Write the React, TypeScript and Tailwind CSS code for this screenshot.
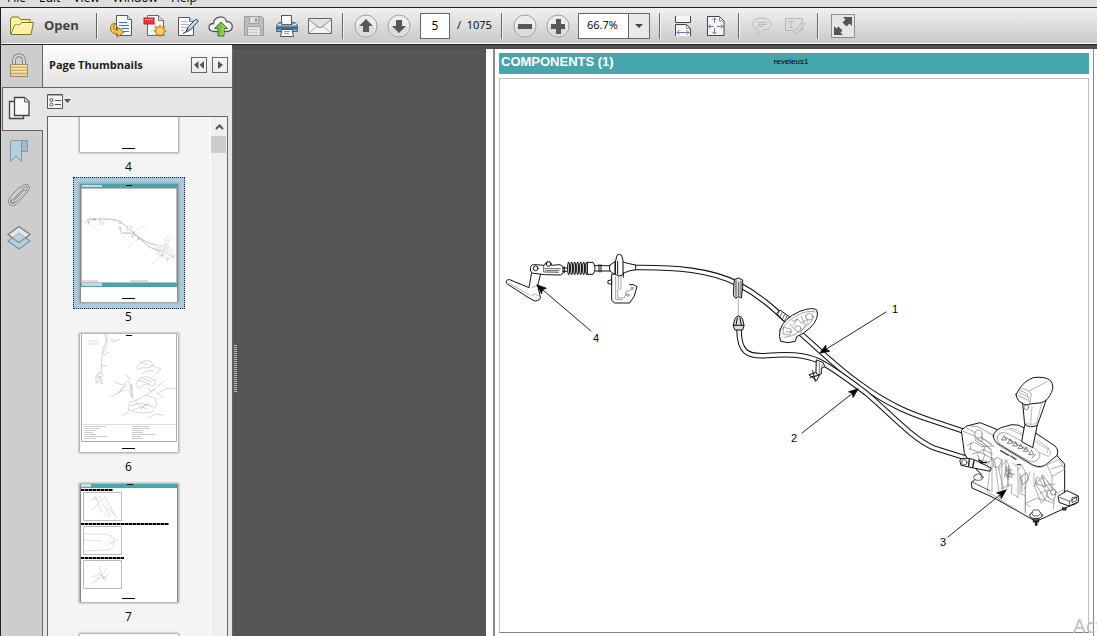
import type { ReactNode } from "react";

const menus = ["File", "Edit", "View", "Window", "Help"];

function IconButton({ label, children }: { label: string; children: ReactNode }) {
  return (
    <button
      aria-label={label}
      className="flex h-[35px] w-[33px] shrink-0 items-center justify-center"
    >
      {children}
    </button>
  );
}

function Separator() {
  return (
    <div className="mr-[5px] ml-[6px] h-[26px] w-[2px] shrink-0 border-r border-[#f2f2f2] bg-[#666]" />
  );
}

function FolderIcon() {
  return (
    <svg width="26" height="22" viewBox="0 0 26 22" strokeLinejoin="round">
      <path d="M1.500 19V4l1.500-2h6.500l2 2.500H21V8" fill="#fdf6a0" stroke="#83701f" />
      <path d="M2 19.500 5.500 10h5l2-2.500h12L22 19.500z" fill="#fdf0a6" stroke="#83701f" />
      <path d="M3.500 18.500 6.500 11h5l2-2.500h9.500" fill="none" stroke="#fffde0" />
    </svg>
  );
}

function ExportIcon() {
  return (
    <svg width="24" height="24" viewBox="0 0 24 24">
      <path d="M6.500 1.500h11l4 4v16h-15z" fill="#fafafa" stroke="#555" />
      <path d="M17.500 1.500v4h4" fill="#ddd" stroke="#777" />
      <path d="M9 8.500h8M9 11.500h10M11 14.500h8M13 17.500h6" stroke="#3a78b4" />
      <path
        d="M6.500 9.500H4C1 10 .5 13 .5 15c0 3 3 5 7 5v3l6.500-5-6.500-5v3c-3 0-3.500-1-3.500-3 0-1.500.5-2.500 2.500-3.500z"
        fill="#f4c04c"
        stroke="#9a6b15"
      />
    </svg>
  );
}

function CreatePdfIcon() {
  return (
    <svg width="24" height="24" viewBox="0 0 24 24">
      <path d="M4.500 1.500h11l5 5v15h-16z" fill="#f7f7f7" stroke="#666" />
      <path d="M15.500 1.500v5h5" fill="#ddd" stroke="#777" />
      <path d="M12 8c1 4-1 8-4 10" fill="none" stroke="#ccc" />
      <rect x="1" y="4" width="10" height="6" fill="#e0393e" stroke="#b5242a" />
      <path d="M2 5.500h8" stroke="#f2888b" />
      <path
        d="m17 11 1.500 2.500 3-1-1 3L23 17l-2.500 1.500 1 3-3-1L17 23l-1.500-2.500-3 1 1-3L11 17l2.500-1.500-1-3 3 1z"
        fill="#f5b942"
        stroke="#bd7f20"
      />
      <circle cx="17" cy="17" r="3" fill="#fbd473" />
    </svg>
  );
}

function SignIcon() {
  return (
    <svg width="24" height="24" viewBox="0 0 24 24">
      <path d="M2.500 3.500h11l4 4v14h-15z" fill="#f9f9f9" stroke="#555" />
      <path d="M13.500 3.500v4h4" fill="#ddd" stroke="#777" />
      <path d="M5 7.500h6M5 10.500h8M5 13.500h6M5 16.500h3" stroke="#b5b5b5" />
      <path d="m10 18 2-5 8-8 2.500 2-8 9z" fill="#a9cbe2" stroke="#3e5566" />
      <path d="m7 19.500 3-1.500 2-4" stroke="#333" fill="none" />
      <path d="m13.500 14 7-7" stroke="#e5f2fa" />
    </svg>
  );
}

function CloudIcon() {
  return (
    <svg width="26" height="24" viewBox="0 0 26 24">
      <path
        d="M7 17.500c-8 0-7.500-8-1.500-8C6 2 17 .5 18.500 7.500c7.500 0 8 10 0 10z"
        fill="#f4f4f4"
        stroke="#555"
        strokeWidth="1.300"
      />
      <path d="m13 8 6.500 6.500H16V22h-6v-7.500H6.500z" fill="#79c043" stroke="#387a1b" />
      <path d="m13 9.500 4 4h-2v7h-3" fill="none" stroke="#b3e285" />
    </svg>
  );
}

function SaveIcon() {
  return (
    <svg width="22" height="22" viewBox="0 0 22 22">
      <path d="M1.500 1.500h17l2 2v17h-19z" fill="#bdbdbd" stroke="#9a9a9a" />
      <path d="M6.500 1.500h9v7h-9z" fill="#dedede" stroke="#a0a0a0" />
      <path d="M12 3h2v4h-2z" fill="#a0a0a0" />
      <path d="M4.500 11.500h13v9h-13z" fill="#e3e3e3" stroke="#a3a3a3" />
      <path d="M6 14.500h9M6 17.500h9" stroke="#bbb" strokeDasharray="2 1" />
    </svg>
  );
}

function PrintIcon() {
  return (
    <svg width="24" height="24" viewBox="0 0 24 24">
      <path d="M6.500 1.500h10v9h-10z" fill="#fdfdfd" stroke="#555" />
      <path d="M4 8.500h3v2h10v-2h3l2.500 3v6h-21v-6z" fill="#8ab0cc" stroke="#46657c" />
      <path d="M2 12.500h20v3H2z" fill="#486a85" />
      <path d="M3 10.500h3M18 10.500h3" stroke="#d5e8f4" />
      <path d="M7 15.500h10l1.500 7h-13z" fill="#fafafa" stroke="#555" />
      <path d="M9 17.500h6M9 19.500h5" stroke="#999" />
    </svg>
  );
}

function MailIcon() {
  return (
    <svg width="26" height="18" viewBox="0 0 26 18">
      <path d="M1.500 1.500h23v15h-23z" fill="#f1f1f1" stroke="#666" />
      <path d="m2 16 8-7M24 16l-8-7" stroke="#aaa" />
      <path d="M2 2.500 11 10q2 1.500 4 0l9-7.500" fill="#e2e2e2" stroke="#888" />
    </svg>
  );
}

function RoundIcon({ d }: { d: string }) {
  return (
    <svg width="24" height="24" viewBox="0 0 24 24">
      <circle cx="12" cy="12" r="11" fill="#ececec" stroke="#a0a0a0" />
      <path d="M3 13a9 9 0 0 0 18 0z" fill="#dcdcdc" />
      <path d={d} fill="#585858" />
    </svg>
  );
}

function FitWidthIcon() {
  return (
    <svg width="18" height="22" viewBox="0 0 18 22" fill="none">
      <path d="M1.500 1v6.500h15V1" fill="#f6f6f6" stroke="#444" />
      <path d="M1.500 21V9.500h11l4 4V21" fill="#f6f6f6" stroke="#444" />
      <path d="M12.500 9.500v4h4" stroke="#888" />
      <path d="M3 17.500h12M5.500 15 3 17.500 5.500 20M12.500 15l2.500 2.500-2.500 2.500" stroke="#6479b0" />
    </svg>
  );
}

function FitPageIcon() {
  return (
    <svg width="18" height="22" viewBox="0 0 18 22" fill="none">
      <path d="M.5 1.500h12l4.500 4.500v14.500H.5z" fill="#f6f6f6" stroke="#444" />
      <path d="M12.500 1.500V6H17" stroke="#888" />
      <path d="M7.500 3v5M7.500 13v6M1.500 11.500h5M10 11.500h6" stroke="#6479b0" />
      <path
        d="m5.500 5 2-2 2 2M5.500 17l2 2 2-2M3.500 9.500l-2 2 2 2M14 9.500l2 2-2 2"
        stroke="#6479b0"
      />
    </svg>
  );
}

function CommentIcon() {
  return (
    <svg width="22" height="20" viewBox="0 0 22 20" fill="none" stroke="#bababa">
      <path d="M11 2c12 0 12 12 1 12l-5 4.500.5-5C-2 11 .5 2 11 2z" fill="#dedede" />
      <path d="M6.500 6.500h9M6.500 8.500h9M6.500 10.500h6" />
    </svg>
  );
}

function MarkupIcon() {
  return (
    <svg width="22" height="20" viewBox="0 0 22 20" fill="none" stroke="#b8b8b8">
      <path d="M1.500 2.500h17v12h-17z" fill="#dcdcdc" />
      <path d="M4 5.500h6M7 5.500v6M5.500 11.500h3" />
      <path d="m10 18 1.500-4 7-8 2.500 2-7 8.500z" fill="#d8d8d8" />
    </svg>
  );
}

function LockIcon() {
  return (
    <svg width="20" height="25" viewBox="0 0 20 25">
      <path d="M5 12V7.500c0-7 10-7 10 0V12" fill="none" stroke="#848484" strokeWidth="4" />
      <path d="M5 12V7.500c0-7 10-7 10 0V12" fill="none" stroke="#d8d8d8" strokeWidth="2" />
      <path d="M1.500 11.500h17v12h-17z" fill="#e9cf94" stroke="#a18c64" />
      <path d="M2 14.500h16M2 17.500h16M2 20.500h16" stroke="#c9aa6d" />
      <path d="M2 12.500h16M2 15.500h16M2 18.500h16" stroke="#f4e3b8" />
    </svg>
  );
}

function PagesIcon() {
  return (
    <svg width="22" height="24" viewBox="0 0 22 24">
      <path d="M1.500 5.500h14v17h-14z" fill="#f2f2f2" stroke="#444" strokeWidth="1.300" />
      <path d="M6.500 1.500h10l4.500 4v14H6.500z" fill="#f8f8f8" stroke="#444" strokeWidth="1.300" />
      <path d="M16.500 1.500v4.500H21" fill="#ddd" stroke="#666" />
    </svg>
  );
}

function BookmarkIcon() {
  return (
    <svg width="20" height="25" viewBox="0 0 20 25" stroke="#7e97a7">
      <path d="M9 1.500h9.500v11H13z" fill="#9cbdd2" />
      <path d="M1.500 22.500V3q0-1.500 2-1.500h11q-2 0-2 3v18L7 17z" fill="#b5cfdf" />
    </svg>
  );
}

function ClipIcon() {
  const d = "M17.500 8 8.500 17.500c-2 2-4.500 0-2.500-2.500L16 4c3-3.500 7-.5 4.500 3L9.500 19.500c-4 4.500-9.500.5-6-4L13 5";
  return (
    <svg width="24" height="24" viewBox="0 0 24 24" fill="none" strokeLinecap="round">
      <path d={d} stroke="#7d7d7d" strokeWidth="2.800" />
      <path d={d} stroke="#dedede" strokeWidth="1.200" />
    </svg>
  );
}

function LayersIcon() {
  return (
    <svg width="26" height="26" viewBox="0 0 26 26" strokeWidth="1.200">
      <path d="m2 16 11-8 11 8-11 8z" fill="#b8d0e0" stroke="#7895a7" />
      <path d="m2 9.500 11-8 11 8-11 8z" fill="#e9e9e9" fillOpacity=".85" stroke="#777" />
      <path d="m7 12.500 6-4.500 6 4.500-6 4.500z" fill="#bfd3df" stroke="#91a9b7" strokeWidth=".8" />
    </svg>
  );
}

const railItems = [
  { label: "Bookmarks", icon: <BookmarkIcon /> },
  { label: "Attachments", icon: <ClipIcon /> },
  { label: "Layers", icon: <LayersIcon /> },
];

function Arrow({ x1, y1, x2, y2 }: { x1: number; y1: number; x2: number; y2: number }) {
  const a = (Math.atan2(y2 - y1, x2 - x1) * 180) / Math.PI;
  return (
    <g>
      <path d={`M${x1} ${y1}L${x2} ${y2}`} stroke="#222" />
      <path d="M0 0-9-3.500-7 0-9 3.500z" fill="#000" transform={`translate(${x2} ${y2}) rotate(${a})`} />
    </g>
  );
}

const cables = [
  "M634 267.500C675 267 712 270 738 284C764 298 776 311 800 333C822 352 836 367 860 384C890 406 912 414 930 420L963 431",
  "M739 329C739 352 747 357 767 355.500C786 354 803 354 819 361C836 370 850 381 866 393C892 415 914 440 934 448L966 458",
];

function CableDrawing({ className }: { className?: string }) {
  return (
    <svg
      className={className}
      viewBox="500 79 588 553"
      fill="none"
      stroke="#111"
      strokeLinejoin="round"
      strokeLinecap="round"
    >
      {cables.map((d) => (
        <g key={d}>
          <path d={d} strokeWidth="5.500" />
          <path d={d} stroke="#fff" strokeWidth="3.400" />
        </g>
      ))}

      {/* transmission end: lever, bellows and bracket */}
      <g transform="translate(495 240) scale(.3333)" strokeWidth="3" fill="#fff">
        <path d="M34 128q-2-10 10-9l58 24 8-46h28l-10 40 8 34q1 11-17 12l-20-11-59-38z" />
        <path d="M112 142q14-8 24 0M42 130l60 34M110 166q10-8 20 0" stroke="#888" strokeWidth="2" />
        <path d="M112 99q-8-4-6-16 3-11 14-9l28 2 4-7q3-6 14-2l4 9 25-2 9 6v20l-8 5-46-1z" />
        <circle cx="122" cy="85" r="7" />
        <path d="M146 78v18l44 1M150 86h46M152 92h40" strokeWidth="2" />
        <circle cx="161" cy="72" r="7" />
        <path d="M204 84h12M204 94h12M208 80v18" />
        <path d="M216 70h62v30h-62z" stroke="none" />
        {[221, 230, 239, 248, 257, 266, 275].map((x) => (
          <ellipse key={x} cx={x} cy="85" rx="3" ry="18" strokeWidth="3.500" />
        ))}
        <path d="M278 67h16q6 8 6 18t-6 18h-16z" />
        <path d="M300 77h45M300 93h45M312 74v22M318 74v22M345 75l15-10v40l-15-12zM384 66l18 5 20 4v14l-20 4-18 7z" />
        <path d="M350 104v76l8 9h46l14-21 8-28-11-6h-30v-34z" />
        <path d="M362 108v70l20 2M370 104v40M378 104v42l-10 4v24h20l6-20 20-6" stroke="#777" strokeWidth="2" />
        <path d="M362 62l4-16q6-6 14 0l4 16v42q-10 8-22 0zM368 64v38M340 122l10-3v14l-10-2z" />
        <circle cx="398" cy="165" r="4" stroke="#888" />
        <circle cx="411" cy="144" r="3" stroke="#888" />
      </g>

      {/* clips and firewall grommet */}
      <g transform="translate(690 250) scale(.3333)" strokeWidth="3" fill="#fff">
        <path d="M132 100l2-12 12-4 12 6v22l-4 32-8-4-9 5-6-8z" fill="#ddd" />
        <path d="M138 92v46M146 98v38M153 94v42" stroke="#555" />
        <path d="M145 146v54" stroke="#888" strokeWidth="2" />
        <path d="M130 226l4-18 6-8q6-4 12 0l6 8 4 18-4 14h-22zM130 226h32M142 204l-4 22M150 204l4 22" fill="#ddd" />
        <path d="M260 190l10-10 28 20-10 18z" />
        <path d="M268 182l-6 16M276 188l-8 16M284 194l-8 16M291 198l-8 16" strokeWidth="2" />
        <path d="M270 240q10-35 60-56 38-14 50-4 10 24-20 54-20 18-40 26l-4 14q-22 8-44 0-6-12-2-34z" />
        <path
          d="M276 238q14-28 58-48 30-10 42-4M284 262q30-2 62-30 24-20 26-34M282 232l22 6-4 18-20-4zM306 214l18-6 10 12 22-14M318 230l14 18 20-30M300 222l12 14M288 246h18M346 196l8 18M334 198l10 26M322 206l-12 20"
          stroke="#777"
          strokeWidth="2"
        />
        <circle cx="358" cy="200" r="10" stroke="#777" strokeWidth="2" />
        <circle cx="324" cy="236" r="9" stroke="#777" strokeWidth="2" />
        <path d="M380 330l20 8 4 12-10 6v16l-16 6v-14z" />
        <path d="M388 338v34M398 344l-4 10" stroke="#777" />
        <path d="M358 374l18-6 12 8-8 16-10-8zM368 362l8 32M360 382l26-6" />
      </g>

      {/* shift lever and gate housing */}
      <g transform="translate(930 360) scale(.3333)" strokeWidth="3" fill="#fff">
        <path d="M95 210l15-12 40-10 60 24 30-16 40 8 40 18 62 66 22 24v92l38 4-2 22-30 12-60 28-32 14-22-12-96-54-20-10-54-24-2-16 30-26-30-28-20-32z" />
        <path
          d="M100 214l34 14 50 40M110 204l38 22 44 34M120 198l24 2 46 26M140 220l16 8v18l-20-10zM112 256l20-10 24 14 30-2M118 266l30 12 10-10 30 14M128 282l20-6 40 20M134 240l30 20-4 20M150 232l34 20M124 248l-4 20M160 250l24 22v28M142 282l6 18 30 6M165 282l-8 24"
          stroke="#777"
          strokeWidth="2"
        />
        <ellipse cx="145" cy="222" rx="11" ry="12" stroke="#777" strokeWidth="2" />
        <path d="M90 300q6-10 40-2l54 26-4 10-50-10-36-8z" />
        <circle cx="103" cy="307" r="8" strokeWidth="2" />
        <path d="M118 298l-2 20M132 302l-4 20M150 308h20M146 300l12 8" strokeWidth="4" />
        <path
          d="M186 292v104M178 340l-6 56 22 12M194 300l8 60 8 60M204 330l26-30 10 26-10 60M216 300v90M226 300l10 80M214 385l30-12M248 310l16 12v90M262 330l14-14 10 20v120M270 340v60l16 8M286 380v78M226 345l22 8M246 376l-2 24 20 12M320 360l-6 20 20 50 16-20M326 352l30 60M338 344l40 60M350 360l32 40M330 400l22-10M345 376l30-4M300 440l-14-10 36-16 50 16M372 420l-2 26M300 336l-16 50M312 340v40M196 410l90 56M352 314l36-16 16 30-36 20zM366 326l32-10M366 348v40M404 388l-20 10M180 334l-6-12"
          fill="none"
          stroke="#888"
          strokeWidth="2"
        />
        <path
          d="M226 318l16 16-12 18M232 334l18 10M240 350l12-8M272 350l18-12 6 20-18 16zM190 300l12-8 14 10-10 20-14-2zM320 370l18-20 8 30zM356 390l22 14-8 18-20-14zM228 322l-4 30M236 318l-2 40M226 330h20M228 342h18"
          fill="none"
          stroke="#666"
          strokeWidth="2"
        />
        <path d="M322 350q-8 10-4 24l28 44M334 346q2 16 26 44M184 296l-12 20M206 326l14 60M276 346v50" fill="none" stroke="#777" strokeWidth="2" />
        <circle cx="370" cy="397" r="8" stroke="#444" strokeWidth="2" />
        <path d="M190 228q2-16 26-26l30-8q22-2 38 11l34 15 57 38q11 10 7 27l-32 27q-15 13-40 4l-95-58q-25-13-25-30z" />
        <path d="M193 240q4 14 28 26l92 54q20 8 36-6l32-26" stroke="#999" strokeWidth="2" fill="none" />
        <path d="M202 230q6-20 34-8l76 42q28 20 12 34-8 12-30 4l-72-42q-24-14-20-30z" stroke="#777" strokeWidth="2" />
        <path d="M224 212q10-12 36-2l100 62q6 10-4 18l-30-14M240 208l42 20M322 240l34 24-6 16" stroke="#999" strokeWidth="2" fill="none" />
        <path
          d="M222 228l-8 12h14zM240 238l-8 12h14zM256 246l-8 12h14zM272 254l-8 12h14zM288 262l-8 12h14zM304 272l-8 12h14zM226 232l64 36M316 284l-10 10"
          strokeWidth="2"
          stroke="#444"
          fill="none"
        />
        <path d="M212 272l24 14M242 288l16 10M262 314h10" strokeWidth="4" stroke="#444" />
        <path d="M284 195l-9 50 33 18 14-68z" />
        <path d="M278 130l6 62q16 14 38 4l26-74z" />
        <path d="M282 186q20 14 42 2M306 140l-4 54M334 132l-14 58" stroke="#999" strokeWidth="2" fill="none" />
        <path d="M258 104l12-20q15-22 40-31 35-5 52 9 12 18 2 36-9 22-29 30l-35 4q-15 6-22-2-16-5-20-26z" />
        <path d="M272 84q20 2 32 18l-4 30M296 94l56-30M266 88l26 14 6 24M264 106l28 14M268 98l24 12" stroke="#888" strokeWidth="2" fill="none" />
        <circle cx="289" cy="142" r="7" stroke="#555" strokeWidth="2" />
        <path d="M385 408l26-16 34 16v18l-28 12-28-10z" />
        <path d="M389 412l30 12 24-14M418 424v12M426 414v14l14-6v-10z" strokeWidth="2" />
        <path d="M398 442v8h10v-8" fill="#444" />
        <ellipse cx="145" cy="352" rx="14" ry="9" strokeWidth="2" />
        <path d="M138 346l6-6 10 6v8M126 366l54 26" strokeWidth="2" />
        <ellipse cx="318" cy="466" rx="19" ry="10" />
        <path d="M306 460l4-10h16l6 10-8 8h-12z" strokeWidth="2" />
        <path d="M310 478v8h16v-8M316 486v10h5v-10" fill="#444" />
      </g>

      <Arrow x1={886} y1={312} x2={820} y2={353} />
      <Arrow x1={802} y1={433} x2={858} y2={389} />
      <Arrow x1={948} y1={537} x2={1006} y2={490} />
      <Arrow x1={591} y1={331} x2={537} y2={285} />
      <g
        fill="#000"
        stroke="none"
        fontSize="11"
        fontFamily="'Liberation Sans', Arial, sans-serif"
      >
        <text x="892" y="313">1</text>
        <text x="791" y="442">2</text>
        <text x="940" y="546">3</text>
        <text x="593" y="342">4</text>
      </g>
    </svg>
  );
}

function Footer() {
  return <div className="mx-auto mb-[3px] h-px w-[13px] bg-black" />;
}

function ThumbCover() {
  return (
    <div className="flex h-full items-end bg-white">
      <Footer />
    </div>
  );
}

function ThumbComponents() {
  return (
    <div className="flex h-full flex-col border-x border-[#888] bg-white">
      <div className="flex h-1 bg-[#47a5ac]">
        <div className="mt-px ml-px h-[2px] w-5 bg-[#bfe0e2]" />
        <div className="mt-px ml-6 h-px w-[6px] bg-black" />
      </div>
      <div className="flex h-[95px] flex-col border border-[#bbb]">
        <CableDrawing className="w-full opacity-50" />
        <div className="mt-auto flex justify-between pr-7">
          <div className="h-[2px] w-4 bg-[#ddd]" />
          <div className="h-[2px] w-[18px] bg-[#ddd]" />
        </div>
      </div>
      <div className="h-1 bg-[#47a5ac]">
        <div className="ml-px h-[3px] w-5 bg-[#bfe0e2]" />
      </div>
      <div className="mt-auto">
        <Footer />
      </div>
    </div>
  );
}

function ThumbExploded() {
  return (
    <div className="flex h-full flex-col bg-white">
      <svg className="h-[108px] w-full" viewBox="0 0 98 108" fill="none" stroke="#999" strokeWidth=".4">
        <path d="M1.500 0v107.500h95V0" stroke="#aaa" strokeWidth="1" />
        <path d="M46 1.500h6" stroke="#000" strokeWidth="1" />
        <path d="M25 0l1 6-4 13 2 2 5-3M22 20l-1 20M9 7h10M9 10h10M30 4l6 3 4-2M21 32h6M27 0v10l-4 9M30 7l5 1" />
        <path d="M16 42l3-4 4 3-2 4 2 5-4-2-3 1zM18 40l3 8M15 44l6-2M17 48l4-6" />
        <path d="M57 33q4-8 13-6l4 4-6 3q-5-2-11 2zM62 40q6-5 12-3M56 50q4-9 12-7l8 4-2 5-8-2-8 4zM60 28l8 3M58 46l12 4M62 44l10 4M70 31l11 4-8 8M68 53l2 4 5-1" />
        <path d="M34 48l8 3 6-4 4 5-3 6 4 6M38 60l5-6 3-2M31 62l8-3M46 40l4 6M52 50v14M57 66l8-5 10 3 2 6-5 8-12 1-12-3 2-8zM50 72l10-3 14 4M60 76l8-8M42 82l7-4M66 62l18-15M76 60l12-6 8 1M68 84l8-4 8 1M78 60l6 4" />
        <path d="M50 50l3 14M54 68l14 8M52 76l18-6M40 56l6-6M38 58l8-2" />
        <path d="M2 90.500h94" stroke="#ddd" strokeWidth="1" />
        <path
          d="M4 92.500h22M4 94.500h16M4 96.500h12M4 98.500h9M4 100.500h12M4 102.500h23M4 104.500h12M52 92.500h17M52 94.500h18M52 96.500h11M52 98.500h11M52 100.500h24M52 102.500h9M52 104.500h11"
          stroke="#ccc"
          strokeWidth="1"
        />
      </svg>
      <div className="mt-auto">
        <Footer />
      </div>
    </div>
  );
}

const steps = [
  { width: "w-8", d: "M9 18 22 5l10 18M12 4l6 14 9 8M8 8l10-4M20 12l8 12M26 16l8 10" },
  { width: "w-[88px]", d: "M1 8h20q11 1 10 10-2 7-11 6L1 25M22 17l3 3M26 18l10-5M1 14l18 1" },
  { width: "w-[43px]", d: "M9 17l8-3 3 4 7-4M12 18h12M16 6l3 10M24 8l-5 8 4 6M14 12l8 6M8 24l9-6" },
];

function ThumbSteps() {
  return (
    <div className="flex h-full flex-col border-x border-[#888] bg-white">
      <div className="flex h-1 shrink-0 bg-[#47a5ac]">
        <div className="h-[3px] w-[10px] bg-[#bfe0e2]" />
        <div className="ml-9 h-px w-[6px] bg-black" />
      </div>
      {steps.map((step) => (
        <div key={step.d} className="mb-px flex flex-col gap-px pt-px">
          <div className={`h-[2px] bg-[repeating-linear-gradient(90deg,#000_0_3px,#777_3px_4px)] ${step.width}`} />
          <svg className="ml-[2px] h-[29px] w-[39px]" viewBox="0 0 39 29" fill="none">
            <path d="M.5.5h38v28H.5z" stroke="#bbb" />
            <path d={step.d} stroke="#bbb" strokeWidth=".5" />
          </svg>
        </div>
      ))}
      <div className="mt-auto">
        <Footer />
      </div>
    </div>
  );
}

const thumbs = [
  { page: 4, content: <ThumbCover /> },
  { page: 5, content: <ThumbComponents /> },
  { page: 6, content: <ThumbExploded /> },
  { page: 7, content: <ThumbSteps /> },
  { page: 8, content: <ThumbCover /> },
];

function Toolbar() {
  return (
    <div className="flex h-9 shrink-0 items-center border-b border-white bg-linear-to-b from-[#f1f1f1] to-[#c9c9c9]">
      <button className="flex w-[89px] shrink-0 items-center gap-[9px] pl-2 text-[13px] font-bold text-[#444]">
        <FolderIcon />
        Open
      </button>
      <Separator />
      <div className="ml-[2px] flex">
        <IconButton label="Export PDF"><ExportIcon /></IconButton>
        <IconButton label="Create PDF"><CreatePdfIcon /></IconButton>
        <IconButton label="Sign"><SignIcon /></IconButton>
        <IconButton label="Upload"><CloudIcon /></IconButton>
        <IconButton label="Save"><SaveIcon /></IconButton>
        <IconButton label="Print"><PrintIcon /></IconButton>
        <IconButton label="Email"><MailIcon /></IconButton>
      </div>
      <Separator />
      <IconButton label="Previous page">
        <RoundIcon d="m12 5 7 7h-4v6H9v-6H5z" />
      </IconButton>
      <IconButton label="Next page">
        <RoundIcon d="m12 19 7-7h-4V6H9v6H5z" />
      </IconButton>
      <input
        aria-label="Page number"
        defaultValue="5"
        className="ml-[5px] h-[26px] w-[30px] shrink-0 border border-[#666] bg-white text-center text-xs"
      />
      <span className="ml-[7px] w-[38px] shrink-0 text-[11px] whitespace-pre">/  1075</span>
      <Separator />
      <IconButton label="Zoom out">
        <RoundIcon d="M5 10h14v5H5z" />
      </IconButton>
      <IconButton label="Zoom in">
        <RoundIcon d="M10 5h5v5h4v5h-4v5h-5v-5H5v-5h5z" />
      </IconButton>
      <div className="relative mr-[3px] ml-1 shrink-0">
        <select
          aria-label="Zoom"
          className="block h-[26px] w-[72px] appearance-none border border-[#666] bg-white pl-2 text-[11px]"
        >
          <option>66.7%</option>
        </select>
        <div className="pointer-events-none absolute inset-y-px right-px flex w-[21px] items-center justify-center border-l border-[#666] bg-[#e9e9e9]">
          <svg width="8" height="4" viewBox="0 0 8 4">
            <path d="M0 0h8L4 4z" fill="#444" />
          </svg>
        </div>
      </div>
      <Separator />
      <div className="flex">
        <IconButton label="Fit width"><FitWidthIcon /></IconButton>
        <IconButton label="Fit page"><FitPageIcon /></IconButton>
      </div>
      <Separator />
      <IconButton label="Comment"><CommentIcon /></IconButton>
      <IconButton label="Edit text"><MarkupIcon /></IconButton>
      <Separator />
      <button
        aria-label="Full screen"
        className="ml-[7px] flex size-6 shrink-0 items-center justify-center border border-[#8d8d8d] bg-[#e6e6e6]"
      >
        <svg width="20" height="20" viewBox="0 0 20 20" fill="#555">
          <path d="M10 1h9v9l-2.500-2.500-3 3L9.500 6.500l3-3z" />
          <path d="M10 19H1v-9l2.500 2.500 2-2 4 4-2 2z" />
        </svg>
      </button>
    </div>
  );
}

function Rail() {
  return (
    <nav className="flex w-[42px] shrink-0 flex-col bg-[#cdcdcd]">
      <button
        aria-label="Security"
        className="flex h-[42px] items-center justify-center border-r border-[#666] pr-[6px] pb-[2px]"
      >
        <LockIcon />
      </button>
      <button
        aria-label="Page Thumbnails"
        className="ml-px flex h-11 items-center justify-center border-y border-l border-[#666] bg-[#e6e6e6] pr-2 pb-[2px]"
      >
        <PagesIcon />
      </button>
      <div className="flex flex-1 flex-col border-r border-[#666] pr-[6px]">
        {railItems.map((item) => (
          <button
            key={item.label}
            aria-label={item.label}
            className="flex h-[43px] items-center justify-center pb-[2px]"
          >
            {item.icon}
          </button>
        ))}
      </div>
    </nav>
  );
}

function ThumbnailPanel() {
  return (
    <aside className="flex w-[189px] shrink-0 flex-col bg-[#e6e6e6]">
      <header className="flex h-[43px] shrink-0 items-center border-b border-[#666] bg-linear-to-b from-white to-[#e2e2e2] pr-[4px] pb-[2px] pl-[6px]">
        <h2 className="mr-auto text-[11px] font-bold whitespace-nowrap text-[#222]">
          Page Thumbnails
        </h2>
        <button
          aria-label="Collapse"
          className="mr-[5px] flex size-4 items-center justify-center border border-[#666]"
        >
          <svg width="10" height="8" viewBox="0 0 10 8" fill="#555">
            <path d="M4.500 0v8L0 4zM10 0v8L5.500 4z" />
          </svg>
        </button>
        <button
          aria-label="Close panel"
          className="flex size-4 items-center justify-center border border-[#666]"
        >
          <svg width="5" height="8" viewBox="0 0 5 8" fill="#555">
            <path d="M0 0v8l5-4z" />
          </svg>
        </button>
      </header>
      <button aria-label="Options" className="flex h-[28px] shrink-0 items-center gap-px pb-[2px] pl-1">
        <svg width="16" height="15" viewBox="0 0 16 15" fill="none" stroke="#555">
          <path d="M.5.5h15v14H.5z" fill="#f2f2f2" />
          <path d="M1 1.500h14" stroke="#aaa" />
          <circle cx="4.500" cy="6" r="1.500" />
          <circle cx="4.500" cy="10.500" r="1.500" />
          <path d="M8 6.500h6M8 10.500h6" />
        </svg>
        <svg width="7" height="4" viewBox="0 0 7 4">
          <path d="M0 0h7L3.500 4z" fill="#555" />
        </svg>
      </button>
      <div className="mr-1 ml-1 flex min-h-0 flex-1 overflow-hidden border border-b-0 border-[#666] bg-[#f4f4f4]">
        <ul className="-mt-[90px] flex flex-1 flex-col items-center pr-px">
          {thumbs.map((thumb) => (
            <li key={thumb.page} className="flex h-[150px] shrink-0 flex-col items-center">
              <div
                className={
                  thumb.page === 5
                    ? "border border-dotted border-[#222] bg-[#a9cbe1] px-[6px] py-[6px]"
                    : "px-[7px] py-[7px]"
                }
              >
                <div className="h-[118px] w-[98px] overflow-hidden shadow-[0_0_2px_1px_#999]">
                  {thumb.content}
                </div>
              </div>
              <span className="text-xs leading-4">{thumb.page}</span>
            </li>
          ))}
        </ul>
        <div className="flex w-[17px] shrink-0 flex-col border-l border-white bg-[#efefef]">
          <div className="flex h-[19px] items-center justify-center">
            <svg width="9" height="6" viewBox="0 0 9 6" fill="none" stroke="#555" strokeWidth="2">
              <path d="M1 5l3.500-3.500L8 5" />
            </svg>
          </div>
          <div className="mr-px h-[17px] bg-[#cdcdcd]" />
        </div>
      </div>
    </aside>
  );
}

function DocumentView() {
  return (
    <main className="flex min-w-0 flex-1 border-t-4 border-[#4e4e4e] bg-[#565656]">
      <div className="w-[6px] shrink-0 border-l border-[#666] pt-[295px] pl-px">
        <div className="h-12 w-[3px] bg-[repeating-linear-gradient(0deg,#bbb_0_1px,transparent_1px_2px)]" />
      </div>
      <div className="w-[248px] shrink-0" />
      <article className="min-w-0 flex-1 bg-white pr-[3px] pl-[7px]">
        <div className="h-full border-r border-l-2 border-[#8a8a8a] px-1 pt-1">
          <header className="grid h-[21px] grid-cols-[1fr_auto_1fr] bg-[#47a5ac] pr-2 pl-[2px] font-['Liberation_Sans',Arial,sans-serif]">
            <h1 className="text-[13px] leading-[18px] font-bold whitespace-nowrap text-white">
              COMPONENTS (1)
            </h1>
            <span className="text-[8px] leading-[18px] text-black">reveleus1</span>
          </header>
          <div className="mt-1 border border-[#c0c0c0] border-b-[#808080]">
            <CableDrawing className="block w-full" />
          </div>
        </div>
      </article>
    </main>
  );
}

export default function App() {
  return (
    <div className="relative flex h-screen flex-col overflow-hidden bg-[#565656] font-['Open_Sans','Noto_Sans',sans-serif] text-black">
      <div className="flex h-2 shrink-0 items-end gap-[13px] overflow-hidden border-b border-[#222] bg-[#dedede] pb-[3px] pl-[7px]">
        {menus.map((menu) => (
          <button key={menu} className="text-xs leading-3">
            {menu}
          </button>
        ))}
      </div>
      <div className="flex min-h-0 flex-1 flex-col border-l border-[#222]">
        <Toolbar />
        <div className="flex min-h-0 flex-1 overflow-hidden border-t border-[#222]">
          <Rail />
          <ThumbnailPanel />
          <DocumentView />
        </div>
      </div>
      <div className="pointer-events-none absolute right-0 bottom-0 w-6 overflow-hidden text-xl leading-5 whitespace-nowrap text-[#bcbcbc]">
        Activate
      </div>
    </div>
  );
}
